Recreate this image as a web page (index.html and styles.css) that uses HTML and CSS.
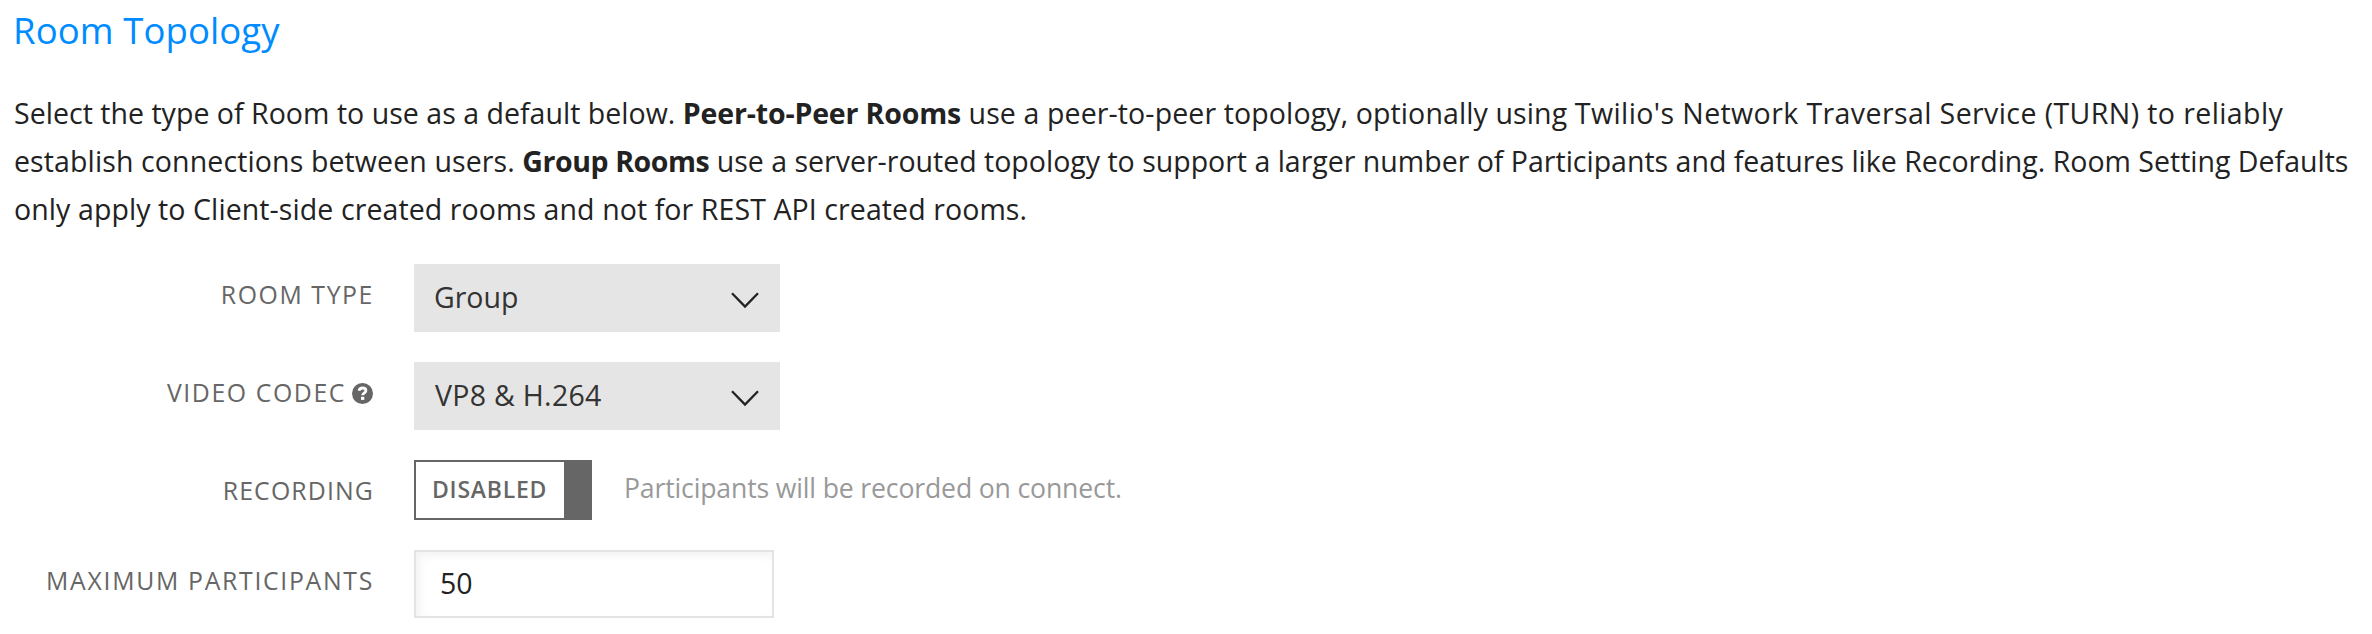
FILE: index.html
```html
<!DOCTYPE html>
<html lang="en">
<head>
<meta charset="utf-8">
<title>Room Topology</title>
<link rel="stylesheet" href="styles.css">
</head>
<body>
<main class="page">
  <h2 class="title">Room Topology</h2>
  <p class="intro"><span class="lead">Select the type of Room to use as a default below.</span> <strong>Peer-to-Peer Rooms</strong> <span class="airy">use a peer-to-peer topology, optionally using </span><span class="wide">Twilio's Network Traversal Service (TURN) to reliably</span><br><span class="airy">establish connections between users.</span> <strong class="group-name">Group Rooms</strong> use a server-routed topology to support a larger number of Participants and features like Recording. Room Setting Defaults<br><span class="last">only apply to Client-side created rooms and not for REST API created rooms.</span></p>
  <form class="form">
    <div class="row">
      <span class="label">ROOM TYPE</span>
      <div class="select"><span>Group</span><svg class="chevron" viewBox="0 0 30 18"><path d="M2 2.2 15 15.6 28 2.2"/></svg></div>
    </div>
    <div class="row">
      <span class="label">VIDEO CODEC<svg class="help" viewBox="0 0 21 21"><circle cx="10.5" cy="10.5" r="10.5"/><path d="M7 7.8C7.4 5.7 8.8 5 10.5 5c2 0 3.4 1.1 3.4 2.8 0 2.1-3.2 2.2-3.2 4.4"/><rect x="9" y="13.8" width="3.3" height="3.1"/></svg></span>
      <div class="select codec"><span>VP8 &amp; H.264</span><svg class="chevron" viewBox="0 0 30 18"><path d="M2 2.2 15 15.6 28 2.2"/></svg></div>
    </div>
    <div class="row">
      <span class="label recording">RECORDING</span>
      <div class="toggle"><span class="state">DISABLED</span><span class="knob"></span></div>
      <span class="hint">Participants will be recorded on connect.</span>
    </div>
    <div class="row">
      <span class="label maximum">MAXIMUM PARTICIPANTS</span>
      <div class="input">50</div>
    </div>
  </form>
</main>
</body>
</html>
```
FILE: styles.css
```css
* { box-sizing: border-box; }
body {
  margin: 0;
  background: #fff;
  color: #222;
  font-family: "Open Sans", "Noto Sans", sans-serif;
}
.page { padding: 0 12px; }
.title {
  margin: 0 0 0 1px;
  height: 60px;
  line-height: 60px;
  font-size: 36.5px;
  font-weight: 400;
  letter-spacing: 0.1px;
  color: #008cff;
}
.intro {
  margin: 29px 0 0 2px;
  font-size: 28.5px;
  line-height: 48px;
  white-space: nowrap;
}
.intro strong { font-weight: 700; letter-spacing: -0.15px; }
.intro .group-name { letter-spacing: -0.42px; }
.lead { letter-spacing: 0.03px; }
.wide { letter-spacing: 0.41px; }
.airy { letter-spacing: 0.12px; }
.last { letter-spacing: 0.09px; }
.form {
  display: flex;
  flex-direction: column;
  gap: 30px;
  margin-top: 31px;
}
.row { display: flex; align-items: flex-start; }
.label {
  display: flex;
  justify-content: flex-end;
  align-items: center;
  width: 362px;
  height: 61px;
  margin: 0 40px -10px 0;
  font-size: 24.8px;
  letter-spacing: 1.6px;
  line-height: 61px;
  white-space: nowrap;
  color: #666;
}
.recording { letter-spacing: 1.15px; }
.maximum { letter-spacing: 1.7px; }
.help { width: 21px; height: 21px; margin: 1px 1px 0 6px; }
.help circle { fill: #666; }
.help path { fill: none; stroke: #fff; stroke-width: 2.8; }
.help rect { fill: #fff; }
.select {
  display: flex;
  justify-content: space-between;
  align-items: flex-start;
  width: 366px;
  height: 68px;
  padding: 0 20px 0 20px;
  background: #e5e5e5;
  color: #333;
  font-size: 28.5px;
  line-height: 66px;
}
.codec { letter-spacing: 0.3px; padding-left: 21px; }
.chevron { width: 30px; height: 18px; margin-top: 27px; }
.chevron path { fill: none; stroke: #222; stroke-width: 2.3; }
.toggle {
  display: flex;
  width: 178px;
  height: 60px;
  border: 2px solid #666;
}
.state {
  flex: 1;
  padding-left: 16px;
  font-size: 23px;
  font-weight: 600;
  letter-spacing: 0.75px;
  line-height: 55px;
  color: #666;
}
.knob { width: 26px; background: #666; }
.hint {
  margin-left: 32px;
  font-size: 26.6px;
  letter-spacing: -0.15px;
  line-height: 56px;
  color: #999;
}
.input {
  width: 360px;
  height: 68px;
  padding-left: 24px;
  border: 2px solid #e4e4e4;
  box-shadow: inset 4px 4px 8px rgba(0, 0, 0, 0.05);
  font-size: 28.5px;
  line-height: 63px;
}
```
